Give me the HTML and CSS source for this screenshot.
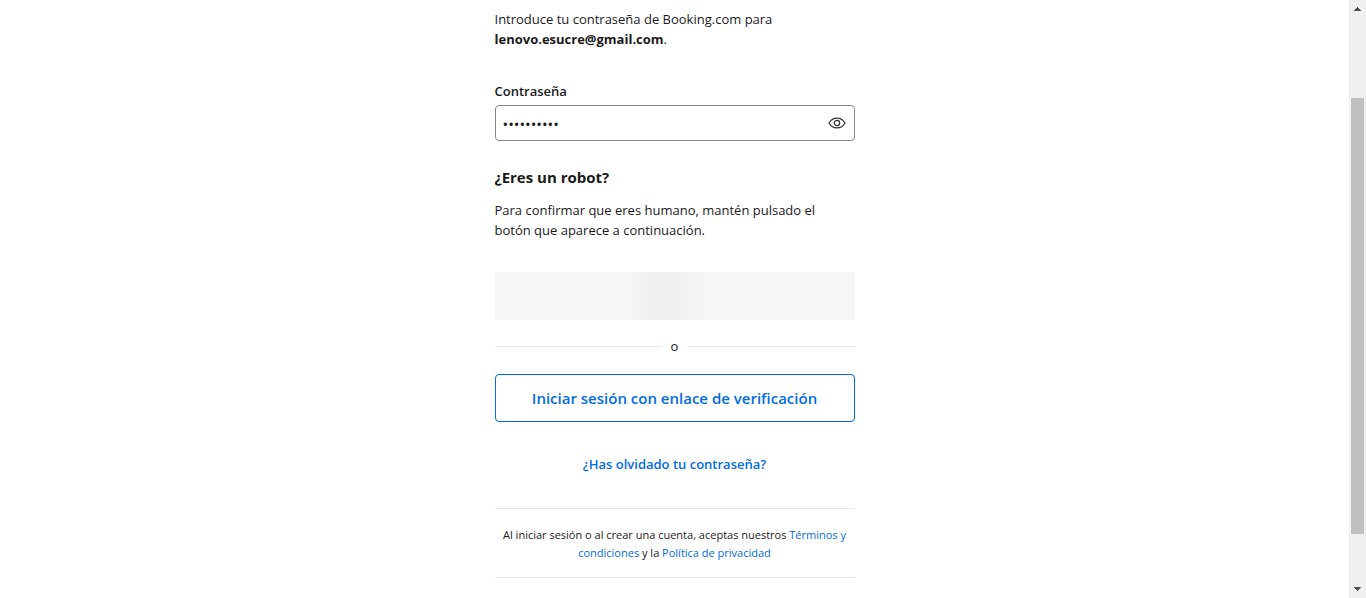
FILE: index.html
```html
<!DOCTYPE html>
<html lang="es">
<head>
<meta charset="utf-8">
<title>Inicia sesión</title>
<link rel="stylesheet" href="styles.css">
</head>
<body>
<div class="page">
  <main class="content">
    <form class="panel">
      <p class="intro">Introduce tu contraseña de Booking.com para<br><strong class="email">lenovo.esucre@gmail.com</strong>.</p>
      <label class="label" for="password">Contraseña</label>
      <div class="field">
        <input class="input" id="password" type="password" value="contrasena">
        <button class="reveal" type="button" aria-label="Mostrar contraseña">
          <svg class="eye" viewBox="0 0 18 12" fill="none" stroke="currentColor" stroke-width="1.2">
            <path d="M1 6C2.800 2.800 5.600 1.100 9 1.100S15.200 2.800 17 6C15.200 9.200 12.400 10.900 9 10.900S2.800 9.200 1 6Z"/>
            <circle cx="9" cy="6" r="2.700"/>
          </svg>
        </button>
      </div>
      <h2 class="title">¿Eres un robot?</h2>
      <p class="hint">Para confirmar que eres humano, mantén pulsado el<br>botón que aparece a continuación.</p>
      <div class="skeleton"></div>
      <div class="divider"><span>o</span></div>
      <button class="verify" type="button">Iniciar sesión con enlace de verificación</button>
      <a class="forgot" href="#">¿Has olvidado tu contraseña?</a>
      <p class="legal">Al iniciar sesión o al crear una cuenta, aceptas nuestros <a href="#">Términos y condiciones</a> y la <a href="#">Política de privacidad</a></p>
    </form>
  </main>
  <div class="scrollbar" aria-hidden="true">
    <svg class="arrow" viewBox="0 0 7 4"><path d="M3 0h1v1h1v1h1v1h1v1H0V3h1V2h1V1h1Z"/></svg>
    <div class="track"><div class="thumb"></div></div>
    <svg class="arrow" viewBox="0 0 7 4"><path d="M0 0h7v1H6v1H5v1H4v1H3V3H2V2H1V1H0Z"/></svg>
  </div>
</div>
</body>
</html>
```
FILE: styles.css
```css
* { box-sizing: border-box; }
body {
  margin: 0;
  background: #fff;
  color: #1a1a1a;
  font: 13px/20px "Open Sans", "Noto Sans", sans-serif;
}
p, h2 { margin: 0; }
a { color: #006ce4; text-decoration: none; }
.page { display: flex; min-height: 100vh; }
.content { flex: 1; padding: 9px 16px 20px; }
.panel { display: flex; flex-direction: column; max-width: 360px; margin: 0 auto; }
.email { font-weight: 700; }
.label { margin-top: 32px; font-weight: 600; }
.field {
  display: flex;
  align-items: center;
  height: 36px;
  margin-top: 4px;
  padding: 0 8px 0 7px;
  border: 1px solid #868686;
  border-radius: 4px;
}
.input {
  flex: 1;
  min-width: 0;
  padding: 2px 0 0;
  border: 0;
  outline: 0;
  background: none;
  color: inherit;
  font-family: inherit;
  font-size: 15px;
}
.reveal { display: flex; padding: 0; border: 0; background: none; color: #333; }
.eye { width: 18px; height: 12px; }
.title { margin-top: 24px; font-size: 15px; line-height: 24px; font-weight: 700; }
.hint { margin-top: 11px; }
.skeleton {
  height: 48px;
  margin-top: 32px;
  background: linear-gradient(90deg, #f6f6f6 36%, #efefef 46%, #f0f0f0 50%, #f6f6f6 60%);
}
.divider { display: flex; align-items: center; gap: 9px; height: 20px; margin: 16px 0 18px; }
.divider::before, .divider::after { content: ""; flex: 1; height: 1px; background: #e7e7e7; }
.verify {
  height: 48px;
  border: 1px solid #006ce4;
  border-radius: 4px;
  background: #fff;
  color: #006ce4;
  font: 600 15px/24px "Open Sans", "Noto Sans", sans-serif;
}
.forgot { align-self: center; margin-top: 32px; font-weight: 600; }
.legal {
  margin-top: 34px;
  padding: 17px 0 15px;
  border: solid #e7e7e7;
  border-width: 1px 0;
  font-size: 11px;
  line-height: 18px;
  text-align: center;
}
.scrollbar {
  display: flex;
  flex-direction: column;
  align-items: center;
  width: 17px;
  padding: 7px 0;
  background: #f0f0f0;
}
.arrow { width: 7px; height: 4px; fill: #505050; }
.track { display: flex; flex: 1; flex-direction: column; width: 13px; padding: 87px 0 53px; }
.thumb { flex: 1; background: #c1c1c1; }
```
